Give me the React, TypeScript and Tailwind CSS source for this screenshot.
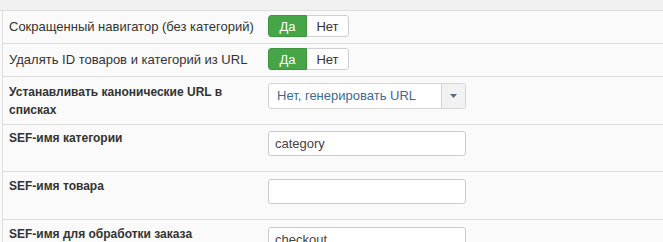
import React from "react";

type Row =
  | { kind: "toggle"; label: string }
  | { kind: "select"; label: string; value: string }
  | { kind: "text"; label: string; value: string };

function Toggle() {
  return (
    <div className="flex h-[22px] w-[81px] overflow-hidden rounded-[3px] text-[13px] leading-none">
      <div className="flex w-[39px] items-center justify-center rounded-l-[3px] border border-[#3f953f] bg-[#46a546] text-white">
        Да
      </div>
      <div className="flex flex-1 items-center justify-center rounded-r-[3px] border border-l-0 border-[#cfcfcf] bg-white text-[#333]">
        Нет
      </div>
    </div>
  );
}

function Select({ value }: { value: string }) {
  return (
    <div className="flex h-[26px] w-[198px] overflow-hidden rounded-[3px] border border-[#d4d4d4] bg-white">
      <div className="flex flex-1 items-center pl-[8px] text-[13px] text-[#3b6a9a]">
        {value}
      </div>
      <div className="flex w-[24px] items-center justify-center border-l border-[#d4d4d4] bg-[#f2f2f2]">
        <svg width="7" height="4" viewBox="0 0 7 4">
          <path d="M0 0h7L3.5 4z" fill="#5a6a7a" />
        </svg>
      </div>
    </div>
  );
}

function TextInput({ value }: { value: string }) {
  return (
    <div className="flex h-[25px] w-[198px] items-center rounded-[3px] border border-[#cccccc] bg-white pl-[6px] text-[13px] text-[#444]">
      {value}
    </div>
  );
}

const rows: Row[] = [
  { kind: "toggle", label: "Сокращенный навигатор (без категорий)" },
  { kind: "toggle", label: "Удалять ID товаров и категорий из URL" },
  { kind: "select", label: "Устанавливать канонические URL в списках", value: "Нет, генерировать URL" },
  { kind: "text", label: "SEF-имя категории", value: "category" },
  { kind: "text", label: "SEF-имя товара", value: "" },
  { kind: "text", label: "SEF-имя для обработки заказа", value: "checkout" },
];

export default function App() {
  return (
    <div className="h-[242px] w-[663px] overflow-hidden bg-[#fafafa] font-['Liberation_Sans',Arial,sans-serif] text-[13px] leading-[18px] text-[#333]">
      {/* top strip */}
      <div className="h-[11px] border-b border-[#dddddd] bg-[#f1f1f1]" />

      <div className="ml-[2px] border-l border-[#dddddd]">
        {/* toggles */}
        {rows.slice(0, 2).map((r) => (
          <div key={r.label} className="flex h-[33px] border-b border-[#dddddd]">
            <div className="w-[265px] pl-[6px] pt-[7px]">{r.label}</div>
            <div className="pt-[4px]">
              <Toggle />
            </div>
          </div>
        ))}

        {/* canonical select */}
        <div className="flex h-[48px] border-b border-[#dddddd]">
          <div className="w-[265px] pl-[6px] pt-[6px] text-[12px] font-bold">
            <div className="w-[235px]">{rows[2].label}</div>
          </div>
          <div className="pt-[6px]">
            <Select value={(rows[2] as { value: string }).value} />
          </div>
        </div>

        {/* text inputs */}
        <div className="flex h-[47px] border-b border-[#dddddd]">
          <div className="w-[265px] pl-[6px] pt-[4px] text-[12px] font-bold">{rows[3].label}</div>
          <div className="pt-[6px]">
            <TextInput value="category" />
          </div>
        </div>
        <div className="flex h-[48px] border-b border-[#dddddd]">
          <div className="w-[265px] pl-[6px] pt-[5px] text-[12px] font-bold">{rows[4].label}</div>
          <div className="pt-[7px]">
            <TextInput value="" />
          </div>
        </div>
        <div className="flex h-[48px]">
          <div className="w-[265px] pl-[6px] pt-[5px] text-[12px] font-bold">{rows[5].label}</div>
          <div className="pt-[7px]">
            <TextInput value="checkout" />
          </div>
        </div>
      </div>
    </div>
  );
}
